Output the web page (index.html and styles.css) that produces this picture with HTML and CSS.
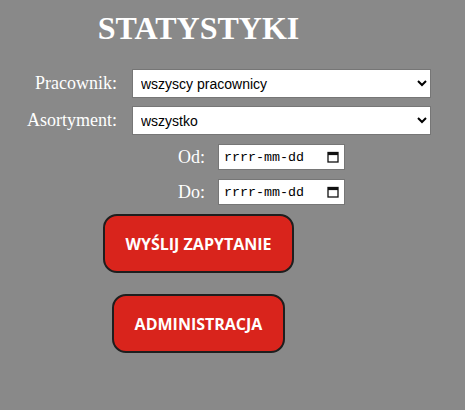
FILE: index.html
```html
<!DOCTYPE html>
<html lang="pl">
<head>
<meta charset="utf-8">
<title>Statystyki</title>
<link rel="stylesheet" href="styles.css">
</head>
<body>
<div class="page">
  <h1 class="title">STATYSTYKI</h1>
  <form class="form">
    <div class="row">
      <label class="label" for="prac">Pracownik:</label>
      <select class="select" id="prac"><option>wszyscy pracownicy</option></select>
    </div>
    <div class="row">
      <label class="label" for="asort">Asortyment:</label>
      <select class="select" id="asort"><option>wszystko</option></select>
    </div>
    <div class="row date-row">
      <label class="label" for="od">Od:</label>
      <span class="date">
        <input class="date-text" type="text" id="od" placeholder="rrrr-mm-dd">
        <svg class="cal" width="12" height="12" viewBox="0 0 12 12" aria-hidden="true">
          <rect x="1" y="1.5" width="10" height="9.5" fill="none" stroke="#111" stroke-width="1.3"/>
          <rect x="1" y="1.5" width="10" height="2.6" fill="#111"/>
        </svg>
      </span>
    </div>
    <div class="row date-row">
      <label class="label" for="do">Do:</label>
      <span class="date">
        <input class="date-text" type="text" id="do" placeholder="rrrr-mm-dd">
        <svg class="cal" width="12" height="12" viewBox="0 0 12 12" aria-hidden="true">
          <rect x="1" y="1.5" width="10" height="9.5" fill="none" stroke="#111" stroke-width="1.3"/>
          <rect x="1" y="1.5" width="10" height="2.6" fill="#111"/>
        </svg>
      </span>
    </div>
    <div class="buttons">
      <button type="button" class="btn">WYŚLIJ ZAPYTANIE</button>
      <button type="button" class="btn">ADMINISTRACJA</button>
    </div>
  </form>
</div>
</body>
</html>
```
FILE: styles.css
```css
html, body {
  margin: 0;
  padding: 0;
  background: #898989;
}
.page {
  width: 397px;
  font-family: "Liberation Serif", "Times New Roman", serif;
  color: #fff;
}
.title {
  margin: 10px 0 0;
  font-size: 32px;
  line-height: 36px;
  font-weight: bold;
  text-align: center;
}
.form {
  margin-top: 23px;
  display: flex;
  flex-direction: column;
}
.row {
  display: grid;
  grid-template-columns: 117px 299px;
  column-gap: 15px;
  align-items: center;
  margin-bottom: 8px;
}
.date-row {
  grid-template-columns: 205px 127px;
  column-gap: 13px;
  margin-bottom: 9px;
}
.row:nth-child(2) {
  margin-bottom: 9px;
}
.label {
  text-align: right;
  font-size: 18px;
  color: #fff;
}
.select {
  box-sizing: border-box;
  height: 29px;
  width: 299px;
  font-family: "Liberation Sans", Arial, sans-serif;
  font-size: 14px;
  padding: 0 4px;
  background: #fff;
  color: #000;
  border: 1px solid #767676;
  border-radius: 0;
}
.date {
  box-sizing: border-box;
  height: 26px;
  width: 127px;
  display: flex;
  align-items: center;
  padding: 0 5px 0 5px;
  background: #fff;
  border: 1px solid #767676;
}
.date-text {
  flex: 1;
  min-width: 0;
  border: 0;
  padding: 0;
  margin: 0;
  outline: none;
  background: transparent;
  font-family: "Liberation Mono", "Courier New", monospace;
  font-size: 13.333px;
  color: #000;
}
.date-text::placeholder {
  color: #000;
  opacity: 1;
}
.cal {
  flex: none;
  display: block;
}
.buttons {
  display: flex;
  flex-direction: column;
  align-items: center;
  gap: 21px;
}
.btn {
  box-sizing: border-box;
  height: 59px;
  padding: 0 21px;
  background: #d9241c;
  color: #fff;
  border: 2px solid #1e1e1e;
  border-radius: 14px;
  font-family: "Open Sans", "Liberation Sans", sans-serif;
  font-weight: bold;
  font-size: 16px;
}
```
